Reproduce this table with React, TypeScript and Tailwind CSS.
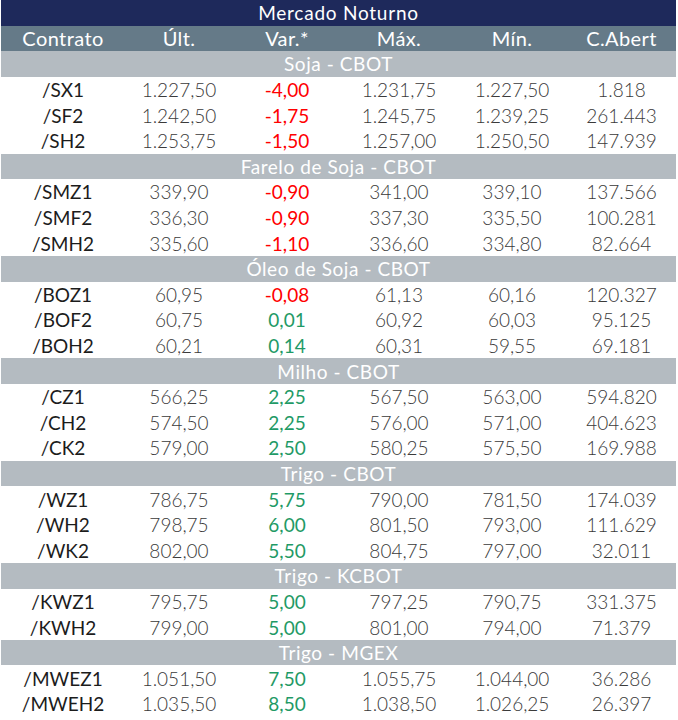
type Row = [string, string, string, string, string, string];

const sections: { title: string; rows: Row[] }[] = [
  {
    title: "Soja - CBOT",
    rows: [
      ["/SX1", "1.227,50", "-4,00", "1.231,75", "1.227,50", "1.818"],
      ["/SF2", "1.242,50", "-1,75", "1.245,75", "1.239,25", "261.443"],
      ["/SH2", "1.253,75", "-1,50", "1.257,00", "1.250,50", "147.939"],
    ],
  },
  {
    title: "Farelo de Soja - CBOT",
    rows: [
      ["/SMZ1", "339,90", "-0,90", "341,00", "339,10", "137.566"],
      ["/SMF2", "336,30", "-0,90", "337,30", "335,50", "100.281"],
      ["/SMH2", "335,60", "-1,10", "336,60", "334,80", "82.664"],
    ],
  },
  {
    title: "Óleo de Soja - CBOT",
    rows: [
      ["/BOZ1", "60,95", "-0,08", "61,13", "60,16", "120.327"],
      ["/BOF2", "60,75", "0,01", "60,92", "60,03", "95.125"],
      ["/BOH2", "60,21", "0,14", "60,31", "59,55", "69.181"],
    ],
  },
  {
    title: "Milho - CBOT",
    rows: [
      ["/CZ1", "566,25", "2,25", "567,50", "563,00", "594.820"],
      ["/CH2", "574,50", "2,25", "576,00", "571,00", "404.623"],
      ["/CK2", "579,00", "2,50", "580,25", "575,50", "169.988"],
    ],
  },
  {
    title: "Trigo - CBOT",
    rows: [
      ["/WZ1", "786,75", "5,75", "790,00", "781,50", "174.039"],
      ["/WH2", "798,75", "6,00", "801,50", "793,00", "111.629"],
      ["/WK2", "802,00", "5,50", "804,75", "797,00", "32.011"],
    ],
  },
  {
    title: "Trigo - KCBOT",
    rows: [
      ["/KWZ1", "795,75", "5,00", "797,25", "790,75", "331.375"],
      ["/KWH2", "799,00", "5,00", "801,00", "794,00", "71.379"],
    ],
  },
  {
    title: "Trigo - MGEX",
    rows: [
      ["/MWEZ1", "1.051,50", "7,50", "1.055,75", "1.044,00", "36.286"],
      ["/MWEH2", "1.035,50", "8,50", "1.038,50", "1.026,25", "26.397"],
    ],
  },
];

const cols = "grid grid-cols-[124px_108px_108px_116px_110px_109px]";
const headers = ["Contrato", "Últ.", "Var.*", "Máx.", "Mín.", "C.Abert"];

export default function App() {
  return (
    <main
      className="min-h-screen bg-white pl-px"
      style={{ fontFamily: "Lato, 'Open Sans', sans-serif" }}
    >
      <div className="w-[675px]">
        <div className="flex h-[25.6px] items-center justify-center bg-[#1e295b] text-[19px] leading-none tracking-[0.04em] text-white">
          Mercado Noturno
        </div>
        <div className={`${cols} h-[25.6px] items-center bg-[#657a88] text-[20px] leading-none tracking-[0.02em] text-white`}>
          {headers.map((h) => (
            <div key={h} className="text-center">
              {h}
            </div>
          ))}
        </div>
        {sections.map((s) => (
          <section key={s.title}>
            <div className="flex h-[25.6px] items-center justify-center bg-[#b4bbc1] text-[19px] leading-none tracking-[0.03em] text-white">
              {s.title}
            </div>
            {s.rows.map((r) => {
              const neg = r[2].startsWith("-");
              return (
                <div key={r[0]} className={`${cols} h-[25.6px] items-center text-[19px] leading-none`}>
                  <div className="text-center text-[#1c1c1c]">{r[0]}</div>
                  <div className="text-center font-light text-[#3a3a3a]">{r[1]}</div>
                  <div className={`text-center ${neg ? "text-[#ff0000]" : "text-[#1f9a66]"}`}>{r[2]}</div>
                  <div className="text-center font-light text-[#3a3a3a]">{r[3]}</div>
                  <div className="text-center font-light text-[#3a3a3a]">{r[4]}</div>
                  <div className="text-center font-light text-[#3a3a3a]">{r[5]}</div>
                </div>
              );
            })}
          </section>
        ))}
      </div>
    </main>
  );
}
